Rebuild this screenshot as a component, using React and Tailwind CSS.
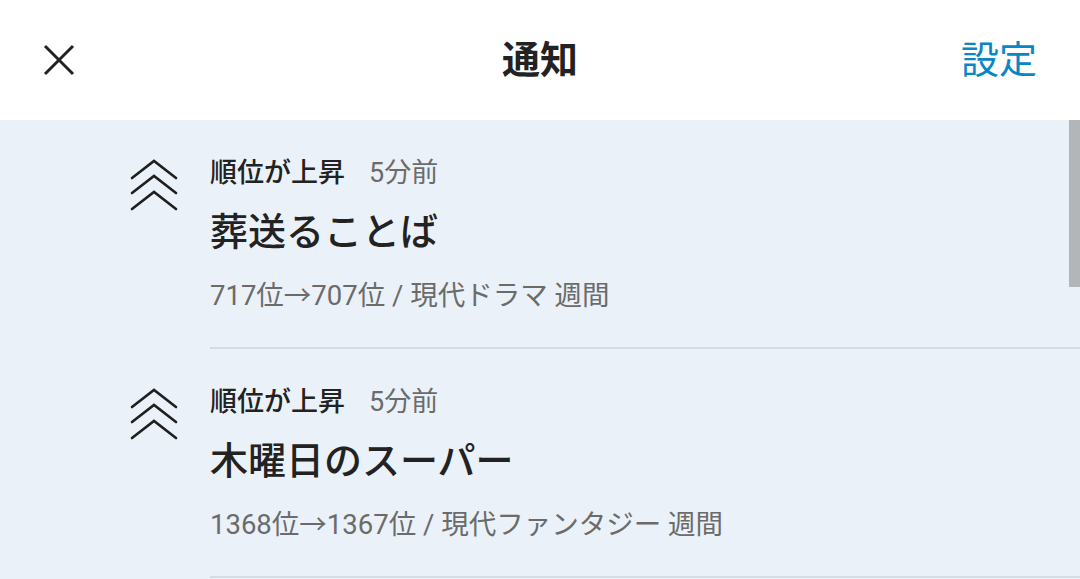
import React from 'react';

const items = [
  { title: '葬送ることば', detail: '717位→707位 / 現代ドラマ 週間' },
  { title: '木曜日のスーパー', detail: '1368位→1367位 / 現代ファンタジー 週間' },
];

const font = { fontFamily: 'Roboto, "Noto Sans CJK JP", sans-serif' };

const RankUpIcon = () => (
  <svg width="48" height="52" viewBox="0 0 48 52" fill="none" stroke="#1f1f1f" strokeWidth="2.6" strokeLinecap="round" strokeLinejoin="miter">
    <path d="M2 19 L24 2 L46 19" />
    <path d="M2 34 L24 17 L46 34" />
    <path d="M2 50 L24 33 L46 50" />
  </svg>
);

const CloseIcon = () => (
  <svg width="32" height="32" viewBox="0 0 32 32" fill="none" stroke="#222" strokeWidth="3">
    <path d="M2 2 L30 30 M30 2 L2 30" />
  </svg>
);

const NotificationRow = ({ title, detail }) => (
  <div className="flex pl-[130px]">
    <div className="w-[48px] mr-[32px] pt-[39px]">
      <RankUpIcon />
    </div>
    <div className="flex-1 pt-[40px] pb-[37px] border-b-2 border-[#d9dcdf]">
      <div className="flex items-center text-[27px] leading-[27px]">
        <span className="font-medium text-[#222]">順位が上昇</span>
        <span className="ml-[24px] text-[#6b6b6b]">5分前</span>
      </div>
      <div className="mt-[26px] text-[38px] leading-[38px] font-medium text-[#222]">{title}</div>
      <div className="mt-[31px] text-[27.5px] leading-[28px] text-[#6b6b6b]">{detail}</div>
    </div>
  </div>
);

export default function App() {
  return (
    <div className="w-[1080px] h-[579px] overflow-hidden bg-[#eaf1f8]" style={font}>
      {/* Header */}
      <div className="relative flex items-center justify-between h-[120px] bg-white px-[43px]">
        <CloseIcon />
        <h1 className="absolute left-1/2 -translate-x-1/2 text-[38px] font-bold text-[#222]">通知</h1>
        <button className="text-[38px] text-[#0a86c7]">設定</button>
      </div>

      {/* List */}
      <div className="relative">
        {items.map((it) => (
          <NotificationRow key={it.title} {...it} />
        ))}
        <div className="absolute right-0 top-0 w-[11px] h-[167px] bg-[#b3b6b9]" />
      </div>
    </div>
  );
}
